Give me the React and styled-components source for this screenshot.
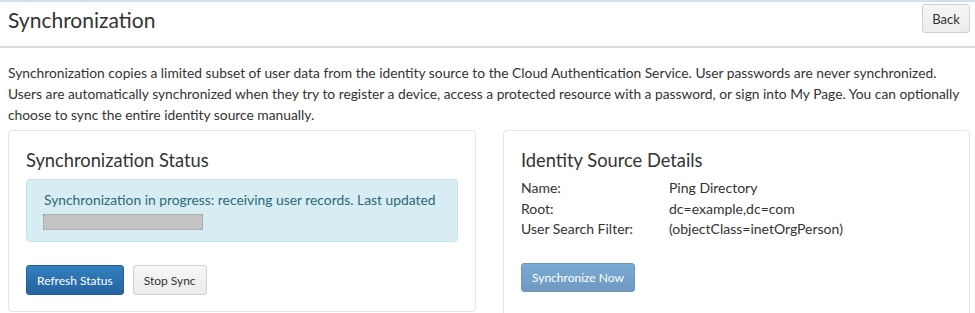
import React from 'react'
import styled, { createGlobalStyle } from 'styled-components'

const GlobalStyle = createGlobalStyle`
  body {
    margin: 0;
    font-family: Lato, "Open Sans", sans-serif;
    color: #333;
    background: #fff;
  }
`

const Page = styled.div`
  border-top: 2px solid #d4dfea;
`

const Header = styled.header`
  display: flex;
  justify-content: space-between;
  align-items: flex-start;
  height: 44px;
  padding: 0 5px 0 8px;
  border-bottom: 2px solid #dcdcdc;
`

const Title = styled.h1`
  margin: 4px 0 0;
  font-size: 21px;
  line-height: 28px;
  font-weight: 400;
  color: #333;
`

const Button = styled.button`
  font-family: inherit;
  font-size: ${props => props.size || 12}px;
  height: ${props => props.tall ? '30px' : '29px'};
  padding: 0 ${props => props.pad || 10}px;
  border-radius: 3px;
  cursor: pointer;
  color: ${props => props.variant === 'primary' ? '#fff' : '#333'};
  border: 1px solid ${props => props.variant === 'primary' ? '#245f92' : '#d0d0d0'};
  background: ${props => props.variant === 'primary'
    ? 'linear-gradient(#3380c0, #2562a0)'
    : 'linear-gradient(#f6f6f6, #ececec)'};
  opacity: ${props => props.disabled ? 0.65 : 1};
`

const BackButton = styled(Button)`
  margin-top: 2px;
  width: 48px;
  padding: 0;
`

const Main = styled.main`
  padding: 14px 5px 0 8px;
`

const Intro = styled.p`
  margin: 0 0 5px;
  font-size: 13.8px;
  line-height: 21px;
`

const Cards = styled.div`
  display: grid;
  grid-template-columns: 468px 467px;
  column-gap: 27px;
  align-items: start;
`

const Card = styled.section`
  border: 1px solid #e4e4e4;
  border-radius: 4px;
  padding: 17px 17px ${props => props.bottom || 16}px;
`

const CardTitle = styled.h2`
  margin: 0 0 ${props => props.gap || 7}px;
  font-size: 18.3px;
  line-height: 24px;
  font-weight: 400;
  color: #333;
`

const Alert = styled.div`
  background: #d7edf3;
  border: 1px solid #c4e4ec;
  border-radius: 4px;
  padding: 10px 17px 11px;
  color: #2b6a78;
  font-size: 13.85px;
  line-height: 20px;
`

const Redacted = styled.span`
  display: inline-block;
  vertical-align: middle;
  width: 158px;
  height: 14px;
  margin-left: -1px;
  background: #c3c3c3;
  border: 1px dotted #999;
`

const Actions = styled.div`
  display: flex;
  gap: 9px;
  margin-top: 23px;
`

const Details = styled.dl`
  display: grid;
  grid-template-columns: 148px 1fr;
  margin: 0 0 23px;
  font-size: 14px;
  line-height: 20.5px;

  dt, dd {
    margin: 0;
  }
`

const details = [
  ['Name:', 'Ping Directory'],
  ['Root:', 'dc=example,dc=com'],
  ['User Search Filter:', '(objectClass=inetOrgPerson)'],
]

export default function App() {
  return (
    <Page>
      <GlobalStyle />
      <Header>
        <Title>Synchronization</Title>
        <BackButton size={13}>Back</BackButton>
      </Header>
      <Main>
        <Intro>
          Synchronization copies a limited subset of user data from the identity source to the Cloud Authentication Service. User passwords are never synchronized.
          Users are automatically synchronized when they try to register a device, access a protected resource with a password, or sign into My Page. You can optionally
          choose to sync the entire identity source manually.
        </Intro>
        <Cards>
          <Card>
            <CardTitle>Synchronization Status</CardTitle>
            <Alert>
              Synchronization in progress: receiving user records. Last updated
              <br />
              <Redacted />
            </Alert>
            <Actions>
              <Button variant="primary" tall pad={10}>Refresh Status</Button>
              <Button tall pad={10}>Stop Sync</Button>
            </Actions>
          </Card>
          <Card bottom={40}>
            <CardTitle gap={6}>Identity Source Details</CardTitle>
            <Details>
              {details.map(([label, value]) => (
                <React.Fragment key={label}>
                  <dt>{label}</dt>
                  <dd>{value}</dd>
                </React.Fragment>
              ))}
            </Details>
            <Button variant="primary" disabled pad={10}>Synchronize Now</Button>
          </Card>
        </Cards>
      </Main>
    </Page>
  )
}
